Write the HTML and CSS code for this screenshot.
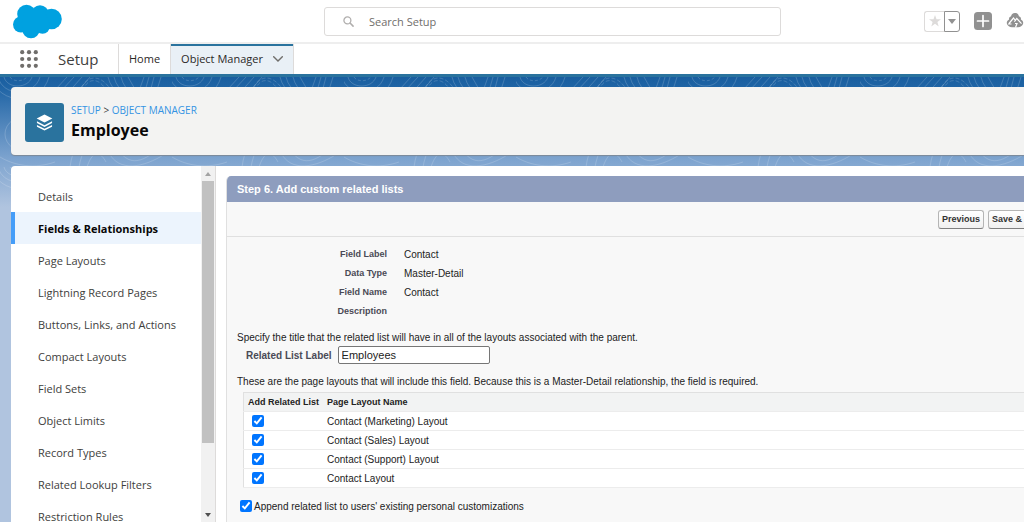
FILE: index.html
```html
<!DOCTYPE html>
<html lang="en">
<head>
<meta charset="utf-8">
<title>Employee | Object Manager | Setup</title>
<link rel="stylesheet" href="styles.css">
</head>
<body>
<div class="app">
  <header class="topbar">
    <svg class="logo" viewBox="0 0 50 35" role="img" aria-label="Salesforce"><g fill="#00a1e0"><circle cx="13.500" cy="10" r="9.300"/><circle cx="27" cy="10" r="8.700"/><circle cx="38.500" cy="15" r="10.300"/><circle cx="8" cy="20.500" r="8"/><circle cx="18" cy="25.500" r="8.700"/><circle cx="29.500" cy="22.500" r="7.300"/><path d="M12 8h20l6 16-22 5-8-8z"/></g></svg>
    <label class="search">
      <svg viewBox="0 0 12 12" aria-hidden="true"><circle cx="4.800" cy="4.800" r="3.800" fill="none" stroke="#b0aead" stroke-width="1.400"/><path d="M7.700 7.700 11 11" stroke="#b0aead" stroke-width="1.700" stroke-linecap="round"/></svg>
      <input type="search" placeholder="Search Setup" aria-label="Search Setup">
    </label>
    <div class="actions">
      <div class="favorites">
        <button class="star" aria-label="Favorite"><svg viewBox="0 0 12 12"><path fill="#dddbda" d="M6 0 7.500 4.300H12L8.400 7 9.700 11.500 6 8.800 2.300 11.500 3.600 7 0 4.300h4.500z"/></svg></button>
        <button class="star-menu" aria-label="Favorites list"><svg viewBox="0 0 8 5"><path fill="#919191" d="M0 0h8L4 5z"/></svg></button>
      </div>
      <button class="icon-button" aria-label="Global actions"><svg viewBox="0 0 18 18"><rect width="18" height="18" rx="3.500" fill="#919191"/><path d="M9 3.500v11M3.500 9h11" stroke="#fff" stroke-width="1.700" stroke-linecap="round"/></svg></button>
      <button class="icon-button" aria-label="Guidance center"><svg viewBox="0 0 18 18"><path fill="#919191" d="M9 1C6.600 1 5.300 2.600 5.100 4.300 3.300 4.700 2.800 6.300 3.100 7.500 1 8.600.4 10.500 1 12c.7 2 2.600 3 4.800 3.200h6.400c2.200-.2 4.100-1.200 4.800-3.200.6-1.500 0-3.400-2.100-4.500.3-1.200-.2-2.800-2-3.200C12.700 2.600 11.400 1 9 1z"/><path d="M2 12h3.500M3 11.500 7.500 6l2.300 3M8.300 9.700l2.500-3.200 4.700 5.200M9 11.500h2l-1.500 4" fill="none" stroke="#fff" stroke-width="1.200"/></svg></button>
    </div>
  </header>
  <nav class="appnav">
    <button class="launcher" aria-label="App Launcher"><svg viewBox="0 0 18 18" fill="#706e6b"><circle cx="2.200" cy="2.200" r="2.100"/><circle cx="9" cy="2.200" r="2.100"/><circle cx="15.800" cy="2.200" r="2.100"/><circle cx="2.200" cy="9" r="2.100"/><circle cx="9" cy="9" r="2.100"/><circle cx="15.800" cy="9" r="2.100"/><circle cx="2.200" cy="15.800" r="2.100"/><circle cx="9" cy="15.800" r="2.100"/><circle cx="15.800" cy="15.800" r="2.100"/></svg></button>
    <span class="app-name">Setup</span>
    <a class="tab" href="#home">Home</a>
    <a class="tab active" href="#objects">Object Manager <svg viewBox="0 0 10 6"><path d="m.7.700 4.300 4.300L9.300.7" fill="none" stroke="#706e6b" stroke-width="1.400" stroke-linecap="round"/></svg></a>
  </nav>
  <div class="stage">
    <svg class="contours" aria-hidden="true">
      <defs><pattern id="contour" width="172" height="90" patternUnits="userSpaceOnUse"><g fill="none" stroke="#fff" stroke-opacity=".17"><path d="M4 0c3 12 24 12 28 0M-2 0c5 20 36 20 42 0M-9 0c8 29 50 29 58 0" /><path d="M10 0c3 5 13 5 17 0" stroke-dasharray="3 2"/><path d="M56 12 67 0M61 14 74 0M66 18 82 0M73 20 90 0"/><path d="M83 14c3-12 14-14 21-4M78 22c4-26 24-28 35-5" stroke-dasharray="4 2"/><path d="M108 0q3 12 12 16M114 0q3 12 14 18M121 0q3 12 12 16M128 0l8 14M139 14l5-14M145 14l4-14M150 15l4-15M156 16l5-16"/><ellipse cx="32" cy="57" rx="9" ry="6"/><ellipse cx="32" cy="57" rx="18" ry="13"/><ellipse cx="32" cy="57" rx="27" ry="20"/><path d="M70 90c5-38 32-43 47-19s31 9 48-4M79 90c5-28 20-33 30-14s34 15 56 1M87 90c5-15 12-18 19-5"/><path d="M0 80c15 9 35 12 55 5M114 40c13-12 35-12 45 4s-17 25-32 17-19-15-13-21z"/></g></pattern></defs>
      <rect width="100%" height="100%" fill="url(#contour)"/>
    </svg>
    <section class="page-header">
      <span class="object-icon"><svg viewBox="0 0 18 17" fill="#fff"><path d="M9 0 17.300 4.200 9 8.500.7 4.200z"/><path d="M1 7.300 9 11.400l8-4.100v1.800l-8 4.100-8-4.100zM1 11.100l8 4.100 8-4.100v1.800L9 17l-8-4.100z"/></svg></span>
      <div>
        <div class="crumbs"><a href="#setup">SETUP</a> <span>&gt;</span> <a href="#objects">OBJECT MANAGER</a></div>
        <h1>Employee</h1>
      </div>
    </section>
    <main class="workspace">
      <nav class="sidebar" aria-label="Object settings">
        <a href="#1">Details</a>
        <a href="#2" class="selected">Fields &amp; Relationships</a>
        <a href="#3">Page Layouts</a>
        <a href="#4">Lightning Record Pages</a>
        <a href="#5">Buttons, Links, and Actions</a>
        <a href="#6">Compact Layouts</a>
        <a href="#7">Field Sets</a>
        <a href="#8">Object Limits</a>
        <a href="#9">Record Types</a>
        <a href="#10">Related Lookup Filters</a>
        <a href="#11">Restriction Rules</a>
      </nav>
      <div class="scrollbar" aria-hidden="true">
        <svg viewBox="0 0 6 4"><path d="M0 4h6L3 0z" fill="#a3a3a3"/></svg>
        <div class="track"><div class="thumb"></div></div>
        <svg viewBox="0 0 6 4"><path d="M0 0h6L3 4z" fill="#505050"/></svg>
      </div>
      <form class="panel">
        <h2>Step 6. Add custom related lists</h2>
        <div class="toolbar"><button type="button">Previous</button><button type="button" class="save">Save &amp;</button></div>
        <div class="panel-body">
          <dl>
            <dt>Field Label</dt><dd>Contact</dd>
            <dt>Data Type</dt><dd>Master-Detail</dd>
            <dt>Field Name</dt><dd>Contact</dd>
            <dt>Description</dt><dd></dd>
          </dl>
          <p>Specify the title that the related list will have in all of the layouts associated with the parent.</p>
          <div class="field"><label for="list-label">Related List Label</label><input id="list-label" type="text" value="Employees"></div>
          <p>These are the page layouts that will include this field. Because this is a Master-Detail relationship, the field is required.</p>
          <table>
            <thead><tr><th class="check-col">Add Related List</th><th>Page Layout Name</th></tr></thead>
            <tbody>
              <tr><td><input id="l1" type="checkbox" checked></td><td><label for="l1">Contact (Marketing) Layout</label></td></tr>
              <tr><td><input id="l2" type="checkbox" checked></td><td><label for="l2">Contact (Sales) Layout</label></td></tr>
              <tr><td><input id="l3" type="checkbox" checked></td><td><label for="l3">Contact (Support) Layout</label></td></tr>
              <tr><td><input id="l4" type="checkbox" checked></td><td><label for="l4">Contact Layout</label></td></tr>
            </tbody>
          </table>
          <label class="append"><input type="checkbox" checked> <span>Append related list to users' existing personal customizations</span></label>
        </div>
      </form>
    </main>
  </div>
</div>
</body>
</html>
```

FILE: styles.css
```css
* { box-sizing: border-box; }
body { margin: 0; font-family: "Open Sans", "Noto Sans", sans-serif; font-size: 11px; color: #3e3e3c; }
svg { display: block; flex: none; }
a { color: inherit; text-decoration: none; }
button { font: inherit; padding: 0; border: 0; background: none; }
.app { height: 100vh; display: flex; flex-direction: column; overflow: hidden; }

.topbar { flex: none; display: grid; grid-template-columns: 311px minmax(0, 457px) 1fr; align-items: center; height: 44px; padding-left: 13px; border-bottom: 2px solid #eee; background: #fff; }
.logo { width: 50px; height: 35px; }
.search { display: flex; align-items: center; gap: 15px; height: 29px; padding-left: 18px; border: 1px solid #dddbda; border-radius: 3px; }
.search svg { width: 11px; height: 11px; }
.search input { flex: 1; min-width: 0; padding: 0; border: 0; outline: 0; font: inherit; background: none; }
.search input::placeholder { color: #706e6b; opacity: 1; }
.actions { display: flex; justify-content: flex-end; align-items: center; gap: 14px; }
.favorites { display: flex; }
.favorites button { display: grid; place-items: center; height: 21px; border: 1px solid #dddbda; }
.favorites .star { width: 20px; border-right: 0; border-radius: 3px 0 0 3px; }
.favorites .star-menu { width: 16px; border-color: #919191; border-radius: 0 3px 3px 0; }
.star svg { width: 12px; height: 12px; }
.star-menu svg { width: 8px; height: 5px; }
.icon-button svg { width: 18px; height: 18px; }

.appnav { flex: none; display: flex; height: 33px; border-bottom: 3px solid #2a739e; background: #fff; }
.launcher { padding: 0 20px; }
.launcher svg { width: 18px; height: 18px; }
.app-name { width: 60px; font-size: 15px; line-height: 30px; }
.tab { padding: 0 10px; border-left: 1px solid #dddbda; color: #2b2826; line-height: 30px; }
.tab.active { display: flex; align-items: center; gap: 10px; border-right: 1px solid #dddbda; background: #e9f0f6; box-shadow: inset 0 2px #2a739e; }
.tab svg { width: 10px; height: 6px; }

.stage { position: relative; flex: 1; min-height: 0; display: flex; flex-direction: column; gap: 11px; padding: 10px 0 0 11px; background: linear-gradient(#195e9f 0, #1f64a5 10px, #7ba2ce 80px, #b0c4df 130px); }
.contours { position: absolute; inset: 0; width: 100%; height: 120px; }
.page-header { position: relative; flex: none; display: flex; align-items: center; gap: 7px; height: 68px; padding: 2px 14px 0; border-radius: 4px 0 0 4px; background: #f3f3f2; box-shadow: 0 1px 1px #7c8998; }
.object-icon { display: grid; place-items: center; width: 39px; height: 39px; border-radius: 3px; background: #2a739e; }
.object-icon svg { width: 17px; height: 17px; }
.crumbs { font-size: 10px; line-height: 16px; }
.crumbs a { color: #3593e3; }
h1 { margin: 0; color: #080707; font-size: 16px; line-height: 24px; }

.workspace { position: relative; flex: 1; min-height: 0; display: grid; grid-template-columns: 190px 15px 1fr; border-radius: 4px 0 0; background: #fff; overflow: hidden; }
.sidebar { padding-top: 14px; overflow: hidden; }
.sidebar a { display: block; height: 32px; padding-left: 27px; line-height: 34px; white-space: nowrap; }
.sidebar .selected { padding-left: 23px; border-left: 4px solid #459df8; background: #ecf4fd; color: #080707; font-weight: 700; }
.scrollbar { display: flex; flex-direction: column; align-items: center; gap: 5px; padding: 6px 1px 5px; border-right: 1px solid #dddbda; background: #f1f1f1; }
.scrollbar svg { width: 6px; height: 4px; }
.track { flex: 1; align-self: stretch; }
.thumb { height: 80%; background: #c1c1c1; }

.panel { min-width: 0; margin: 10px 0 0 10px; border-left: 1px solid #e0e0e0; border-radius: 5px 0 0; background: #f8f8f8; color: #222; font-family: "Liberation Sans", Arial, sans-serif; font-size: 10px; overflow: hidden; }
h2 { margin: 0; padding-left: 10px; background: #8e9dbe; color: #fff; font-size: 11px; line-height: 26px; }
.toolbar { display: flex; justify-content: flex-end; align-items: center; gap: 4px; height: 35px; margin-right: -24px; border-bottom: 1px solid #e0e0e0; }
.toolbar button { height: 19px; padding: 0 3px; border: 1px solid #b5b5b5; border-bottom-color: #7f7f7f; border-radius: 3px; background: linear-gradient(#fff, #f0f0f0); color: #333; font-size: 9px; font-weight: 700; text-align: left; }
.toolbar .save { width: 60px; }
.panel-body { padding: 8px 0 0 10px; }
dl { display: grid; grid-template-columns: 150px 1fr; column-gap: 17px; margin: 0 0 8px; line-height: 19px; }
dt { color: #4a4a56; font-size: 9px; font-weight: 700; text-align: right; }
dd { margin: 0; }
p { margin: 0; line-height: 17px; }
.field { display: flex; align-items: center; gap: 6px; margin-bottom: 9px; padding-left: 9px; color: #4a4a56; font-weight: 700; }
.field input { width: 152px; height: 18px; padding: 0 3px; border: 1px solid #767676; border-radius: 2px; background: #fff; color: #222; font: 11px "Liberation Sans", Arial, sans-serif; }
table { width: calc(100% - 6px); margin: 2px 0 0 6px; border: 1px solid #e0e0e0; border-right: 0; border-collapse: collapse; background: #fff; }
th, td { height: 19px; padding: 0 4px; border-bottom: 1px solid #ececec; text-align: left; }
th { background: #f2f3f3; font-size: 9px; white-space: nowrap; }
.check-col { width: 79px; }
input[type="checkbox"] { display: block; width: 12px; height: 12px; margin: 0; accent-color: #0075ff; }
td input[type="checkbox"] { margin-left: 4px; }
.append { display: flex; align-items: center; gap: 2px; margin: 12px 0 0 3px; }
```
